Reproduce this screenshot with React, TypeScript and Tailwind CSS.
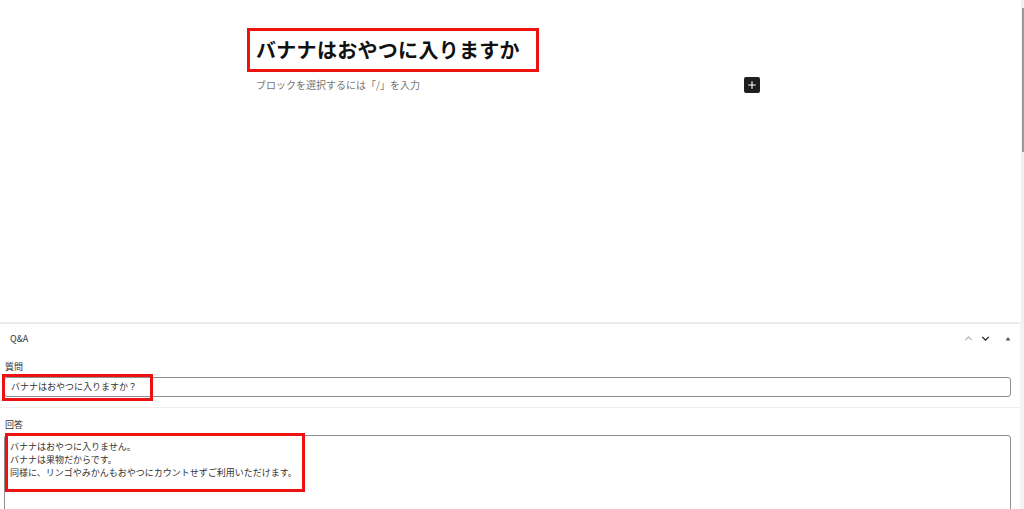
import React from "react";

const jp = { fontFamily: '"Noto Sans CJK JP", "Noto Sans", sans-serif' };

function ChevronUp({ className }: { className?: string }) {
  return (
    <svg viewBox="0 0 24 24" className={className} fill="none" stroke="currentColor" strokeWidth={2.5}>
      <path d="M6 15l6-6 6 6" />
    </svg>
  );
}

function ChevronDown({ className }: { className?: string }) {
  return (
    <svg viewBox="0 0 24 24" className={className} fill="none" stroke="currentColor" strokeWidth={2.5}>
      <path d="M6 9l6 6 6-6" />
    </svg>
  );
}

export default function App() {
  return (
    <div className="flex h-[509px] w-[1024px] flex-col overflow-hidden bg-white text-[#1e1e1e]" style={jp}>
      {/* Editor canvas */}
      <div className="flex h-[322px] shrink-0">
        <div className="flex-1">
          <div className="ml-[247px] w-[520px] pt-[28px]">
            <div className="inline-block border-[3px] border-[#ee1111] pl-[6px] pr-[16px]">
              <h1 className="text-[20px] font-bold leading-[38px] tracking-[0.3px] text-[#111]">バナナはおやつに入りますか</h1>
            </div>
            <div className="mt-[3px] flex items-center justify-between pl-[9px] pr-[7px]">
              <p className="text-[10px] leading-[20px] text-[#757575]">ブロックを選択するには「/」を入力</p>
              <button className="flex h-4 w-4 items-center justify-center rounded-[2px] bg-[#1e1e1e] text-white">
                <svg viewBox="0 0 16 16" className="h-3 w-3" fill="none" stroke="currentColor" strokeWidth={1.5}>
                  <path d="M8 3v10M3 8h10" />
                </svg>
              </button>
            </div>
          </div>
        </div>
        {/* Scrollbar */}
        <div className="w-[3px] bg-[#f0f0f0] pt-[8px]">
          <div className="ml-[1px] h-[144px] w-[2px] bg-[#9a9a9a]" />
        </div>
      </div>

      {/* Meta box */}
      <div className="flex flex-1">
        <div className="flex-1 border-t-2 border-[#ececec]">
          <div className="flex h-[29px] items-center justify-between pl-[10px] pr-[8px]">
            <span className="text-[9px] text-[#333]">Q&amp;A</span>
            <div className="flex items-center gap-[4px]">
              <ChevronUp className="h-[13px] w-[13px] text-[#b4b4b4]" />
              <ChevronDown className="h-[13px] w-[13px] text-[#1e1e1e]" />
              <svg viewBox="0 0 10 10" className="ml-[8px] h-[8px] w-[8px] text-[#555]">
                <path d="M5 2.5L8 7H2z" fill="currentColor" />
              </svg>
            </div>
          </div>

          <div className="border-b border-[#ededed] pb-[10px] pl-[4px] pr-[9px] pt-[8px]">
            <div className="pl-[1px] text-[9px] leading-[12px] text-[#333]">質問</div>
            <div className="relative mt-[4px]">
              <div className="flex h-[20px] items-center rounded-[3px] border border-[#8c8f94] pl-[6px] text-[9px] text-[#333]">
                バナナはおやつに入りますか？
              </div>
              <div className="pointer-events-none absolute left-[-2px] top-[-3px] h-[27px] w-[151px] border-[3px] border-[#ee1111]" />
            </div>
          </div>

          <div className="pl-[4px] pr-[9px] pt-[11px]">
            <div className="pl-[1px] text-[9px] leading-[12px] text-[#333]">回答</div>
            <div className="relative mt-[4px]">
              <div className="h-[90px] rounded-[3px] border border-[#8c8f94] pl-[5px] pt-[4px] text-[9px] leading-[13px] text-[#333]">
                <div>バナナはおやつに入りません。</div>
                <div>バナナは果物だからです。</div>
                <div>同様に、リンゴやみかんもおやつにカウントせずご利用いただけます。</div>
              </div>
              <div className="pointer-events-none absolute left-[1px] top-[-2px] h-[59px] w-[300px] border-[3px] border-[#ee1111]" />
            </div>
          </div>
        </div>
        <div className="w-[4px] bg-[#f3f3f3]" />
      </div>
    </div>
  );
}
